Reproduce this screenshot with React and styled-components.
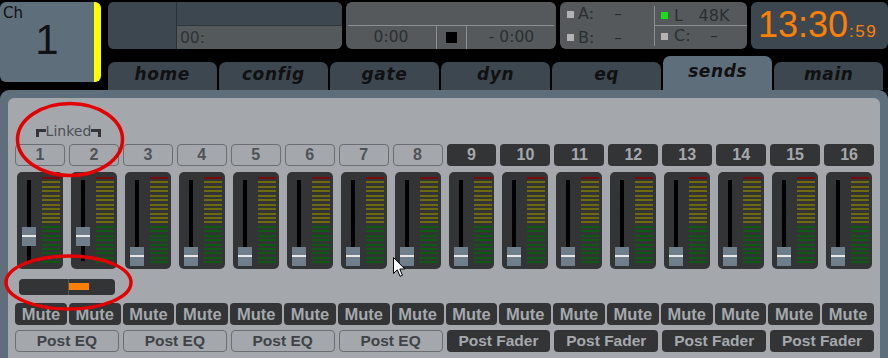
import React from 'react';
import styled, { createGlobalStyle } from 'styled-components';

const GlobalStyle = createGlobalStyle`
  html, body {
    margin: 0;
    padding: 0;
    background: #000;
  }
  body {
    width: 888px;
    height: 358px;
    overflow: hidden;
    font-family: "DejaVu Sans", sans-serif;
  }
`;

const Screen = styled.div`
  position: relative;
  width: 888px;
  height: 358px;
  overflow: hidden;
  background: #000;
`;

/* ---------- header ---------- */

const Header = styled.div`
  display: grid;
  grid-template-columns: 101px 1fr;
  column-gap: 7px;
  height: 90px;
`;

const ChannelBox = styled.div`
  margin-top: 2px;
  height: 80px;
  box-sizing: border-box;
  background: #5f6e7b;
  border-right: 7px solid #ffff00;
  border-radius: 6px;
  display: flex;
  flex-direction: column;
  color: #111;
`;

const ChLabel = styled.div`
  padding: 4px 0 0 3px;
  font: 15px/14px "DejaVu Sans", sans-serif;
`;

const ChNumber = styled.div`
  text-align: center;
  font: 42px/1 "Liberation Sans", sans-serif;
  margin-top: -1px;
`;

const RightColumn = styled.div`
  display: flex;
  flex-direction: column;
  min-width: 0;
`;

const InfoRow = styled.div`
  display: flex;
  gap: 4px;
  margin-top: 2px;
  height: 47px;
`;

const InfoBox = styled.div`
  width: ${p => p.$w}px;
  flex: ${p => (p.$w ? 'none' : '1')};
  border-radius: 6px;
  overflow: hidden;
  background: ${p => (p.$dark ? '#3d4750' : '#55595c')};
  color: #2b2f31;
  font: 15.5px/1 "DejaVu Sans", sans-serif;
`;

const TrackBox = styled(InfoBox)`
  display: grid;
  grid-template-columns: 69px 1fr;
  grid-template-rows: 24px 1fr;
`;

const TrackArt = styled.div`
  grid-row: 1 / span 2;
  background: #3d4750;
  border-right: 1px solid #2a3238;
`;

const TrackTitle = styled.div`
  background: #3d4750;
  border-bottom: 1px solid #2e363c;
`;

const TrackTime = styled.div`
  background: #54595c;
  color: #2f3336;
  padding: 5px 0 0 3px;
`;

const TransportBox = styled(InfoBox)`
  display: grid;
  grid-template-rows: 24px 1fr;
`;

const TransportTop = styled.div`
  margin: 0 2px;
  border-bottom: 1px solid #8b8f92;
`;

const TransportBottom = styled.div`
  display: grid;
  grid-template-columns: 90px 30px 1fr;
`;

const TransportCell = styled.div`
  display: flex;
  align-items: center;
  justify-content: center;
  border-left: ${p => (p.$line ? '1px solid #8b8f92' : 'none')};
`;

const StopSquare = styled.div`
  width: 11px;
  height: 11px;
  background: #000;
`;

const SyncBox = styled(InfoBox)`
  display: grid;
  grid-template-columns: 94px 1fr;
  grid-template-rows: 24px 1fr;
`;

const SyncCell = styled.div`
  display: flex;
  align-items: center;
  padding-left: ${p => (p.$right ? 6 : 7)}px;
  border-left: ${p => (p.$right ? '1px solid #8b8f92' : 'none')};
  border-bottom: ${p => (p.$right && p.$top ? '1px solid #8b8f92' : 'none')};
  margin: ${p => (p.$right ? (p.$top ? '4px 0 0 0' : '0 0 3px 0') : '0')};
  font-size: 16px;
`;

const Led = styled.span`
  width: 7px;
  height: 7px;
  background: ${p => (p.$on ? '#18e018' : '#b3b3b3')};
  margin-right: ${p => (p.$right ? 6 : 4)}px;
  flex: none;
`;

const SyncLabel = styled.span`
  width: 20px;
`;

const SyncValue = styled.span`
  width: 40px;
  text-align: center;
`;

const ClockBox = styled(InfoBox)`
  display: flex;
  align-items: baseline;
  padding: 5px 0 0 7px;
  color: #ff8000;
`;

const ClockMain = styled.span`
  font: 36px/1 "Liberation Sans", sans-serif;
`;

const ClockSeconds = styled.span`
  font: 17px/1 "Liberation Sans", sans-serif;
  letter-spacing: 1.5px;
  margin-left: 1px;
`;

const TabRow = styled.div`
  display: flex;
  align-items: flex-end;
  gap: 2.5px;
  margin-top: 7px;
  height: 34px;
  padding-right: 5px;
`;

const Tab = styled.div`
  flex: 1;
  height: ${p => (p.$active ? 34 : 28)}px;
  box-sizing: border-box;
  padding-top: ${p => (p.$active ? 3 : 0)}px;
  background: ${p => (p.$active ? '#5f6e7b' : '#3d4750')};
  border-radius: 7px 7px 0 0;
  text-align: center;
  font: italic bold 17px/24px "DejaVu Sans", sans-serif;
  letter-spacing: 0.6px;
  color: #111;
`;

/* ---------- sends panel ---------- */

const Panel = styled.div`
  height: 268px;
  box-sizing: border-box;
  background: #5f6e7b;
  border-radius: 9px 9px 0 0;
  padding: 8px 8px 0 8px;
`;

const PanelInner = styled.div`
  height: 100%;
  box-sizing: border-box;
  background: #a4a8ac;
  border-radius: 6px 6px 0 0;
  padding: 24px 6px 0 7px;
`;

const Row = styled.div`
  display: grid;
  grid-template-columns: repeat(${p => p.$cols || 16}, 1fr);
  column-gap: ${p => (p.$gap !== undefined ? p.$gap : 4)}px;
  margin-top: ${p => p.$mt || 0}px;
  height: ${p => p.$h}px;
`;

const LinkedLabel = styled.div`
  grid-column: 1 / span 2;
  display: flex;
  justify-content: center;
  align-items: flex-start;
  font: 14px/18px "DejaVu Sans", sans-serif;
  color: #4d5053;
  padding-left: 3px;
`;

const Bracket = styled.span`
  width: 7px;
  height: 5px;
  margin-top: 7px;
  border-top: 3px solid #353535;
  border-${p => p.$side}: 3px solid #353535;
`;

const NumButton = styled.div`
  box-sizing: border-box;
  border-radius: 4px;
  display: flex;
  align-items: center;
  justify-content: center;
  font: bold 16px/1 "Liberation Sans", sans-serif;
  background: ${p => (p.$dark ? '#333435' : 'transparent')};
  color: ${p => (p.$dark ? '#a5a9ad' : '#505356')};
  border: ${p => (p.$dark ? 'none' : '1.5px solid #6b6f73')};
`;

const Strip = styled.div`
  margin: 0 2px;
  background: #333435;
  border-radius: 5px;
  display: flex;
  padding-left: 5px;
`;

const FaderSlot = styled.div`
  position: relative;
  width: 14px;
  &::before {
    content: "";
    position: absolute;
    left: 5px;
    top: 8px;
    bottom: 8px;
    width: 4px;
    background: #000;
  }
`;

const Knob = styled.div`
  position: absolute;
  left: 0;
  top: ${p => p.$top}px;
  width: 14px;
  height: 19px;
  background: #6e7e8b;
  &::after {
    content: "";
    position: absolute;
    left: 0;
    right: 0;
    top: 8px;
    height: 2px;
    background: #e8e8e8;
  }
`;

const Meter = styled.div`
  margin-left: 6px;
  padding-top: 5px;
  width: 18px;
  display: flex;
  flex-direction: column;
  gap: 2.45px;
`;

const Segment = styled.div`
  height: 2px;
  background: ${p => p.$color};
`;

const PanBar = styled.div`
  grid-column: 1 / span 2;
  margin: 0 4px;
  background: #333435;
  border-radius: 4px;
  display: flex;
`;

const PanHalf = styled.div`
  width: ${p => (p.$left ? '49px' : 'auto')};
  flex: ${p => (p.$left ? 'none' : '1')};
  border-right: ${p => (p.$left ? '1px solid #55585b' : 'none')};
`;

const PanMark = styled.div`
  width: 20px;
  height: 7px;
  margin-top: 4px;
  background: #ff8000;
`;

const MuteButton = styled.div`
  border-radius: 4px;
  background: #333435;
  color: #a5a9ad;
  display: flex;
  align-items: center;
  justify-content: center;
  font: bold 16.5px/1 "Liberation Sans", sans-serif;
`;

const PostButton = styled.div`
  box-sizing: border-box;
  border-radius: 4px;
  display: flex;
  align-items: center;
  justify-content: center;
  font: bold 15.5px/1 "Liberation Sans", sans-serif;
  background: ${p => (p.$dark ? '#333435' : 'transparent')};
  color: ${p => (p.$dark ? '#a5a9ad' : '#404346')};
  border: ${p => (p.$dark ? 'none' : '1.5px solid #6b6f73')};
`;

/* ---------- overlays ---------- */

const Annotations = styled.svg`
  position: absolute;
  left: 0;
  top: 0;
  pointer-events: none;
`;

const Cursor = styled.svg`
  position: absolute;
  left: 393px;
  top: 257px;
`;

const TABS = ['home', 'config', 'gate', 'dyn', 'eq', 'sends', 'main'];

const channels = Array.from({ length: 16 }, (_, i) => ({
  n: i + 1,
  dark: i >= 8,
  fader: i < 2 ? 55 : 75,
}));

const segmentColor = i => (i === 0 ? '#780a0a' : i <= 10 ? '#6f6a0b' : '#0b5a10');
const segments = Array.from({ length: 20 }, (_, i) => segmentColor(i));

export default function App() {
  return (
    <Screen>
      <GlobalStyle />
      <Header>
        <ChannelBox>
          <ChLabel>Ch</ChLabel>
          <ChNumber>1</ChNumber>
        </ChannelBox>
        <RightColumn>
          <InfoRow>
            <TrackBox $w={234} $dark>
              <TrackArt />
              <TrackTitle />
              <TrackTime>00:</TrackTime>
            </TrackBox>
            <TransportBox $w={210}>
              <TransportTop />
              <TransportBottom>
                <TransportCell>0:00</TransportCell>
                <TransportCell $line>
                  <StopSquare />
                </TransportCell>
                <TransportCell $line>- 0:00</TransportCell>
              </TransportBottom>
            </TransportBox>
            <SyncBox $w={187}>
              <SyncCell>
                <Led />
                <SyncLabel>A:</SyncLabel>
                <SyncValue>–</SyncValue>
              </SyncCell>
              <SyncCell $right $top>
                <Led $on $right />
                <SyncLabel>L</SyncLabel>
                <SyncValue>48K</SyncValue>
              </SyncCell>
              <SyncCell>
                <Led />
                <SyncLabel>B:</SyncLabel>
                <SyncValue>–</SyncValue>
              </SyncCell>
              <SyncCell $right>
                <Led $right />
                <SyncLabel>C:</SyncLabel>
                <SyncValue>–</SyncValue>
              </SyncCell>
            </SyncBox>
            <ClockBox $dark>
              <ClockMain>13:30</ClockMain>
              <ClockSeconds>:59</ClockSeconds>
            </ClockBox>
          </InfoRow>
          <TabRow>
            {TABS.map(t => (
              <Tab key={t} $active={t === 'sends'}>{t}</Tab>
            ))}
          </TabRow>
        </RightColumn>
      </Header>

      <Panel>
        <PanelInner>
          <Row $h={18}>
            <LinkedLabel>
              <Bracket $side="left" />
              Linked
              <Bracket $side="right" />
            </LinkedLabel>
          </Row>

          <Row $h={22} $mt={4}>
            {channels.map(c => (
              <NumButton key={c.n} $dark={c.dark}>{c.n}</NumButton>
            ))}
          </Row>

          <Row $h={97} $mt={6}>
            {channels.map(c => (
              <Strip key={c.n}>
                <FaderSlot>
                  <Knob $top={c.fader} />
                </FaderSlot>
                <Meter>
                  {segments.map((col, i) => (
                    <Segment key={i} $color={col} />
                  ))}
                </Meter>
              </Strip>
            ))}
          </Row>

          <Row $h={16} $mt={10}>
            <PanBar>
              <PanHalf $left />
              <PanHalf>
                <PanMark />
              </PanHalf>
            </PanBar>
          </Row>

          <Row $h={22} $mt={8} $gap={2}>
            {channels.map(c => (
              <MuteButton key={c.n}>Mute</MuteButton>
            ))}
          </Row>

          <Row $h={22} $mt={5} $cols={8}>
            {[0, 1, 2, 3].map(i => (
              <PostButton key={'eq' + i}>Post EQ</PostButton>
            ))}
            {[0, 1, 2, 3].map(i => (
              <PostButton key={'f' + i} $dark>Post Fader</PostButton>
            ))}
          </Row>
        </PanelInner>
      </Panel>

      <Annotations width="888" height="358" viewBox="0 0 888 358">
        <ellipse cx="70" cy="139.5" rx="52.5" ry="36" fill="none" stroke="#e30000" strokeWidth="3.5" />
        <ellipse cx="68.5" cy="282.5" rx="62.5" ry="26.5" fill="none" stroke="#e30000" strokeWidth="3.5" />
      </Annotations>

      <Cursor width="13" height="21" viewBox="0 0 13 21">
        <path d="M0.5 0.5 L0.5 16.5 L4.3 12.8 L7 19.3 L9.4 18.3 L6.8 12 L11.8 12 Z" fill="#fff" stroke="#000" strokeWidth="1" strokeLinejoin="round" />
      </Cursor>
    </Screen>
  );
}
